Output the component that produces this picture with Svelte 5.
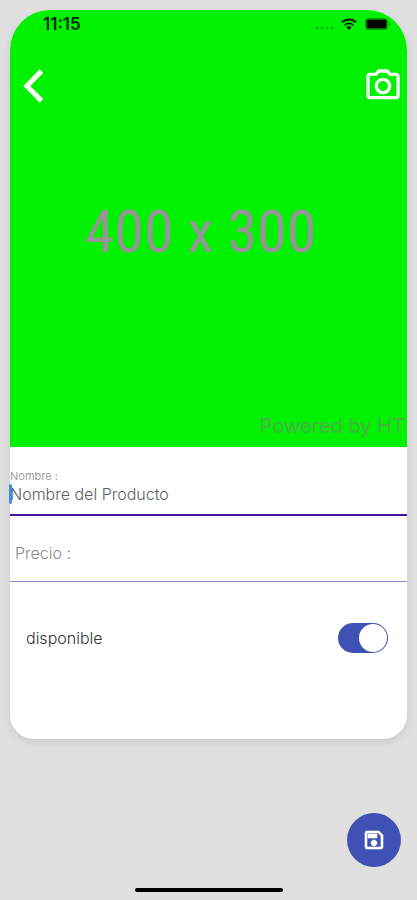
<script>
    let nombre = $state('Nombre del Producto')
    let precio = $state('')
    let disponible = $state(true)
</script>

<main class="page">
    <form class="card">
        <div class="photo">
            <div class="statusBar">
                <span class="time">11:15</span>
                <div class="statusIcons">
                    <svg class="signal" width="18" height="12" viewBox="0 0 18 12" aria-hidden="true">
                        <circle cx="2" cy="10" r="1.2" />
                        <circle cx="7" cy="10" r="1.2" />
                        <circle cx="12" cy="10" r="1.2" />
                        <circle cx="17" cy="10" r="1.2" />
                    </svg>
                    <svg width="16" height="12" viewBox="0 0 16 12" aria-hidden="true">
                        <path d="M1 4.4a10 10 0 0 1 14 0" fill="none" stroke="#001a00" stroke-width="2" />
                        <path d="M3.7 7.1a6.2 6.2 0 0 1 8.6 0" fill="none" stroke="#001a00" stroke-width="1.8" />
                        <path d="M8 12 5.4 9.3a3.8 3.8 0 0 1 5.2 0z" fill="#001a00" />
                    </svg>
                    <svg width="26" height="12" viewBox="0 0 26 12" aria-hidden="true">
                        <rect x="0.5" y="0.5" width="22" height="11" rx="2" fill="none" stroke="#00a000" />
                        <rect x="1.5" y="1.5" width="20" height="9" rx="1" fill="#000" />
                        <path d="M24 4v4q1.5-.6 1.5-2T24 4z" fill="#009000" />
                    </svg>
                </div>
            </div>

            <div class="toolbar">
                <button type="button" class="iconBtn" aria-label="Volver">
                    <svg width="40" height="40" viewBox="0 0 24 24">
                        <path d="M17.5 4.2 15.4 2 5.6 12l9.8 10 2.1-2.2L9.8 12z" />
                    </svg>
                </button>
                <button type="button" class="iconBtn" aria-label="Tomar foto">
                    <svg width="40" height="40" viewBox="0 0 24 24">
                        <path d="M20 4h-3.17L15 2H9L7.17 4H4c-1.1 0-2 .9-2 2v12c0 1.1.9 2 2 2h16c1.1 0 2-.9 2-2V6c0-1.1-.9-2-2-2zm0 14H4V6h4.05l1.83-2h4.24l1.83 2H20v12zM12 7c-2.76 0-5 2.24-5 5s2.24 5 5 5 5-2.24 5-5-2.24-5-5-5zm0 8c-1.65 0-3-1.35-3-3s1.35-3 3-3 3 1.35 3 3-1.35 3-3 3z" />
                    </svg>
                </button>
            </div>

            <p class="size">400 x 300</p>
            <p class="powered">Powered by HT</p>
        </div>

        <div class="field active">
            <label for="nombre">Nombre :</label>
            <input id="nombre" type="text" bind:value={nombre}>
            <span class="cursor"></span>
        </div>

        <div class="field price">
            <input type="text" aria-label="Precio" placeholder="Precio :" bind:value={precio}>
        </div>

        <div class="available">
            <label for="disponible">disponible</label>
            <input id="disponible" class="switch" type="checkbox" role="switch" bind:checked={disponible}>
        </div>
    </form>

    <button type="button" class="saveBtn" aria-label="Guardar">
        <svg width="24" height="24" viewBox="0 0 24 24">
            <path d="M17 3H5c-1.1 0-2 .9-2 2v14c0 1.1.9 2 2 2h14c1.1 0 2-.9 2-2V7l-4-4zm2 16H5V5h11.2L19 7.8V19zM12 12c-1.66 0-3 1.34-3 3s1.34 3 3 3 3-1.34 3-3-1.34-3-3-3zM6 6h9v4H6z" stroke="white" stroke-width="0.6" />
        </svg>
    </button>
    <div class="homeBar"></div>
</main>

<style>
    :global(body) {
        background-color: #e0e0e0;
    }

    .page {
        min-height: 100vh;
        box-sizing: border-box;
        padding: 10px;
        font-family: Inter, sans-serif;
    }

    .card {
        background-color: white;
        border-radius: 40px 40px 24px 24px;
        box-shadow: 0 3px 8px rgba(0, 0, 0, 0.1);
        padding-bottom: 68px;
    }

    .photo {
        display: flex;
        flex-direction: column;
        background-color: #00f200;
        border-radius: 40px 40px 0 0;
        padding-bottom: 9px;
    }

    .statusBar {
        display: flex;
        justify-content: space-between;
        align-items: center;
        height: 28px;
        padding: 0 16px 0 33px;
    }

    .time {
        color: #002800;
        font-size: 17px;
        font-weight: 600;
    }

    .statusIcons {
        display: flex;
        align-items: center;
        gap: 8px;
    }

    .signal {
        fill: #00a800;
    }

    .toolbar {
        display: flex;
        justify-content: space-between;
        padding: 28px 4px 0;
    }

    .iconBtn {
        display: flex;
        padding: 0;
        border: none;
        background-color: transparent;
        fill: white;
        cursor: pointer;
    }

    .size {
        margin: 88px 0 0;
        padding-right: 16px;
        text-align: center;
        font-family: 'Roboto Condensed', 'Liberation Sans', sans-serif;
        font-size: 60px;
        line-height: 76px;
        color: #969696;
    }

    .powered {
        margin: 144px 0 0;
        padding-right: 2px;
        text-align: right;
        font-size: 20px;
        line-height: 24px;
        color: #4cae4c;
    }

    .field {
        position: relative;
        display: flex;
        flex-direction: column;
        border-bottom: 1px solid #9184cc;
    }

    .field label {
        font-size: 11px;
        line-height: 14px;
        color: #a0a0a0;
    }

    .field input {
        width: 100%;
        box-sizing: border-box;
        height: 20px;
        padding: 0;
        border: none;
        outline: none;
        background-color: transparent;
        font-family: inherit;
        font-size: 16px;
        font-weight: 300;
        color: #606060;
    }

    .field input::placeholder {
        color: #888;
        opacity: 1;
    }

    .active {
        padding: 22px 0 10px;
        border-bottom: 2px solid #4a1598;
    }

    .active label {
        margin-bottom: 1px;
    }

    .price {
        padding: 27px 0 18px 5px;
    }

    .cursor {
        position: absolute;
        left: -1px;
        bottom: 10px;
        width: 3px;
        height: 20px;
        border-radius: 2px;
        background-color: #3f8fd8;
    }

    .available {
        display: flex;
        justify-content: space-between;
        align-items: center;
        padding: 41px 19px 18px 16px;
    }

    .available label {
        font-size: 16px;
        font-weight: 300;
        color: #333;
    }

    .switch {
        appearance: none;
        display: flex;
        width: 50px;
        height: 30px;
        box-sizing: border-box;
        margin: 0;
        padding: 1px;
        border-radius: 15px;
        background-color: #bdbdbd;
        cursor: pointer;
    }

    .switch::before {
        content: '';
        width: 28px;
        height: 28px;
        border-radius: 50%;
        background-color: white;
    }

    .switch:checked {
        justify-content: flex-end;
        background-color: #3f51b5;
    }

    .saveBtn {
        position: fixed;
        right: 16px;
        bottom: 33px;
        display: flex;
        align-items: center;
        justify-content: center;
        width: 54px;
        height: 54px;
        border: none;
        border-radius: 50%;
        background-color: #3f51b5;
        fill: white;
        cursor: pointer;
    }

    .homeBar {
        position: fixed;
        left: 0;
        right: 0;
        bottom: 8px;
        width: 148px;
        height: 4px;
        margin: 0 auto;
        border-radius: 2px;
        background-color: black;
    }
</style>
